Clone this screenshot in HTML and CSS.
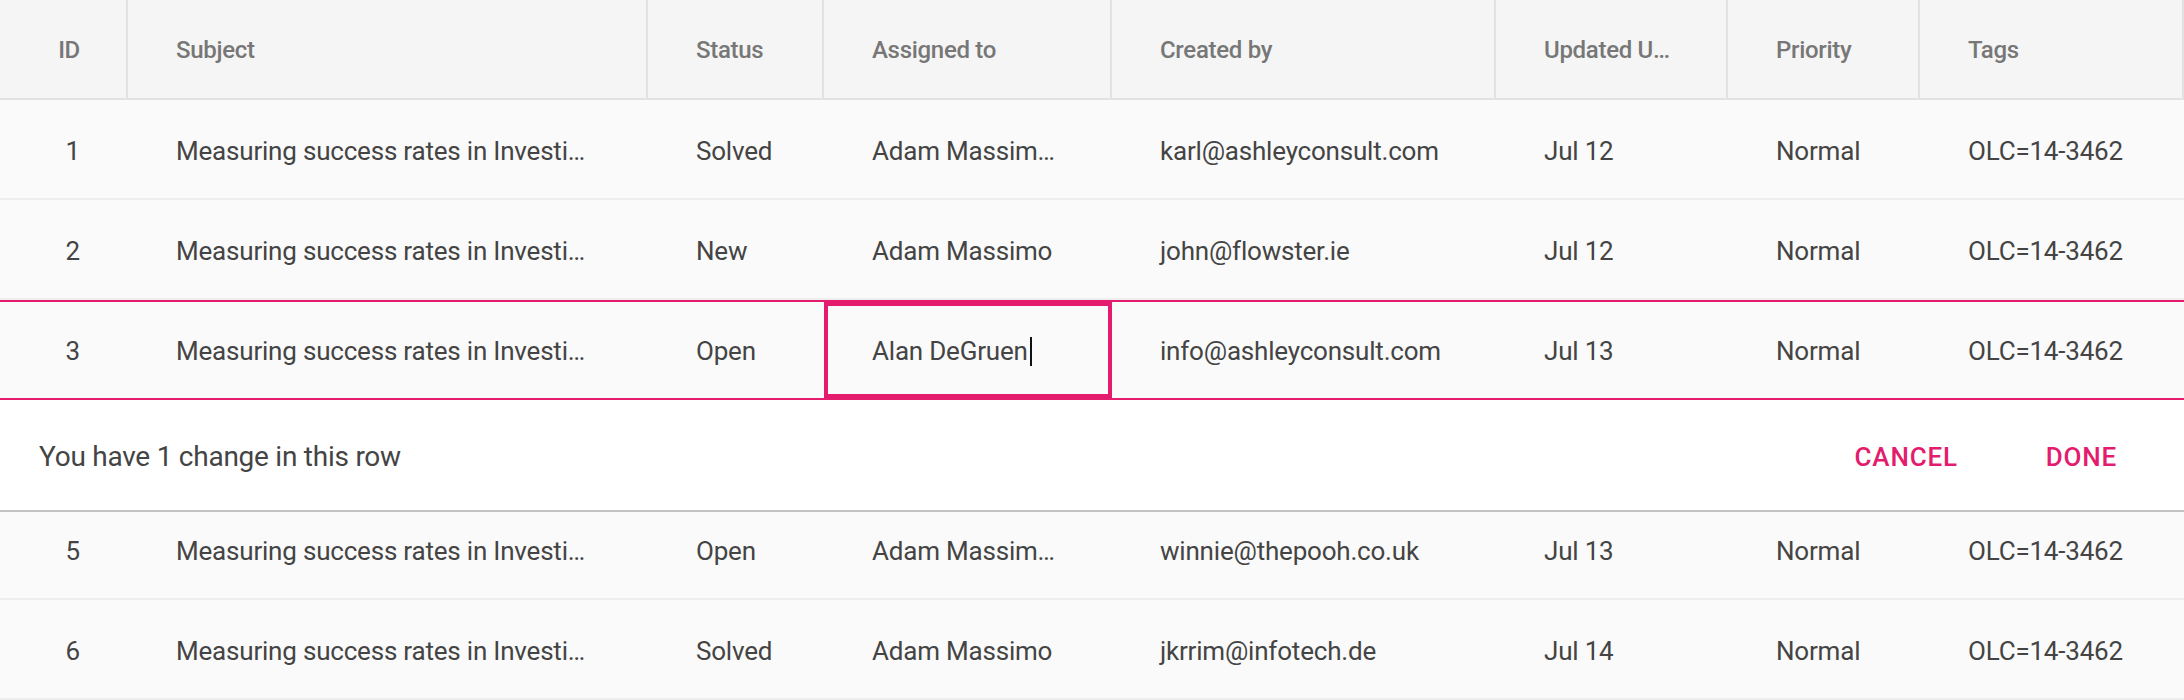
FILE: index.html
```html
<!DOCTYPE html>
<html lang="en">
<head>
<meta charset="utf-8">
<title>Tickets</title>
<link rel="stylesheet" href="styles.css">
</head>
<body>
<div class="table">
  <div class="grid head">
    <div class="cell num">ID</div>
    <div class="cell">Subject</div>
    <div class="cell">Status</div>
    <div class="cell">Assigned to</div>
    <div class="cell">Created by</div>
    <div class="cell">Updated U…</div>
    <div class="cell">Priority</div>
    <div class="cell">Tags</div>
  </div>

  <div class="grid row">
    <div class="cell num">1</div>
    <div class="cell">Measuring success rates in Investi…</div>
    <div class="cell">Solved</div>
    <div class="cell">Adam Massim…</div>
    <div class="cell">karl@ashleyconsult.com</div>
    <div class="cell">Jul 12</div>
    <div class="cell">Normal</div>
    <div class="cell">OLC=14-3462</div>
  </div>

  <div class="grid row">
    <div class="cell num">2</div>
    <div class="cell">Measuring success rates in Investi…</div>
    <div class="cell">New</div>
    <div class="cell">Adam Massimo</div>
    <div class="cell">john@flowster.ie</div>
    <div class="cell">Jul 12</div>
    <div class="cell">Normal</div>
    <div class="cell">OLC=14-3462</div>
  </div>

  <div class="grid row editing">
    <div class="cell num">3</div>
    <div class="cell">Measuring success rates in Investi…</div>
    <div class="cell">Open</div>
    <div class="cell edit-cell"><span class="edit-text">Alan DeGruen</span><span class="caret"></span></div>
    <div class="cell">info@ashleyconsult.com</div>
    <div class="cell">Jul 13</div>
    <div class="cell">Normal</div>
    <div class="cell">OLC=14-3462</div>
  </div>

  <div class="change-bar">
    <span class="change-msg">You have 1 change in this row</span>
    <div class="actions">
      <button class="btn">CANCEL</button>
      <button class="btn">DONE</button>
    </div>
  </div>

  <div class="grid row">
    <div class="cell num">5</div>
    <div class="cell">Measuring success rates in Investi…</div>
    <div class="cell">Open</div>
    <div class="cell">Adam Massim…</div>
    <div class="cell">winnie@thepooh.co.uk</div>
    <div class="cell">Jul 13</div>
    <div class="cell">Normal</div>
    <div class="cell">OLC=14-3462</div>
  </div>

  <div class="grid row">
    <div class="cell num">6</div>
    <div class="cell">Measuring success rates in Investi…</div>
    <div class="cell">Solved</div>
    <div class="cell">Adam Massimo</div>
    <div class="cell">jkrrim@infotech.de</div>
    <div class="cell">Jul 14</div>
    <div class="cell">Normal</div>
    <div class="cell">OLC=14-3462</div>
  </div>
</div>
</body>
</html>
```

FILE: styles.css
```css
* { box-sizing: border-box; }

html, body {
  margin: 0;
  padding: 0;
  background: #fafafa;
}

body {
  font-family: Roboto, "Noto Sans", "Liberation Sans", sans-serif;
  width: 2184px;
  height: 700px;
  overflow: hidden;
}

.table {
  display: flex;
  flex-direction: column;
}

.grid {
  display: grid;
  grid-template-columns: 128px 520px 176px 288px 384px 232px 192px 264px;
}

.cell {
  display: flex;
  align-items: center;
  padding-left: 48px;
  white-space: nowrap;
  overflow: hidden;
}

.cell.num {
  justify-content: flex-end;
  padding-left: 0;
  padding-right: 48px;
}

.head {
  height: 100px;
  background: #f5f5f5;
  border-bottom: 2px solid #e2e2e2;
  font-size: 24px;
  font-weight: 500;
  color: #777777;
  letter-spacing: -0.3px;
}

.head .cell {
  border-right: 2px solid #e2e2e2;
  padding-top: 2px;
}

.head .cell.num {
  padding-right: 46px;
}

.row {
  height: 100px;
  background: #fafafa;
  border-bottom: 2px solid #eeeeee;
  font-size: 26px;
  color: #444444;
  letter-spacing: -0.2px;
}

.row .cell {
  padding-top: 4px;
}

.row.editing {
  border-top: 2px solid #e31c6e;
  border-bottom: 2px solid #e31c6e;
}

.row.editing .cell {
  padding-top: 2px;
}

.row .edit-cell {
  border: 4px solid #e31c6e;
  padding-left: 44px;
  padding-top: 0;
  overflow: visible;
}

.caret {
  display: inline-block;
  width: 2px;
  height: 29px;
  background: #111111;
  margin-left: 2px;
}

.change-bar {
  position: relative;
  z-index: 1;
  height: 112px;
  margin-bottom: -12px;
  background: #ffffff;
  border-bottom: 2px solid #c2c2c2;
  display: flex;
  align-items: center;
  justify-content: space-between;
  padding: 3px 35px 0 39px;
}

.change-msg {
  font-size: 28px;
  color: #444444;
  letter-spacing: -0.25px;
}

.actions {
  display: flex;
  gap: 24px;
}

.btn {
  font-family: Roboto, "Noto Sans", "Liberation Sans", sans-serif;
  font-size: 26px;
  font-weight: 500;
  letter-spacing: 0.8px;
  color: #e31c6e;
  background: none;
  border: none;
  padding: 0 32px;
  height: 56px;
  cursor: pointer;
}
```
